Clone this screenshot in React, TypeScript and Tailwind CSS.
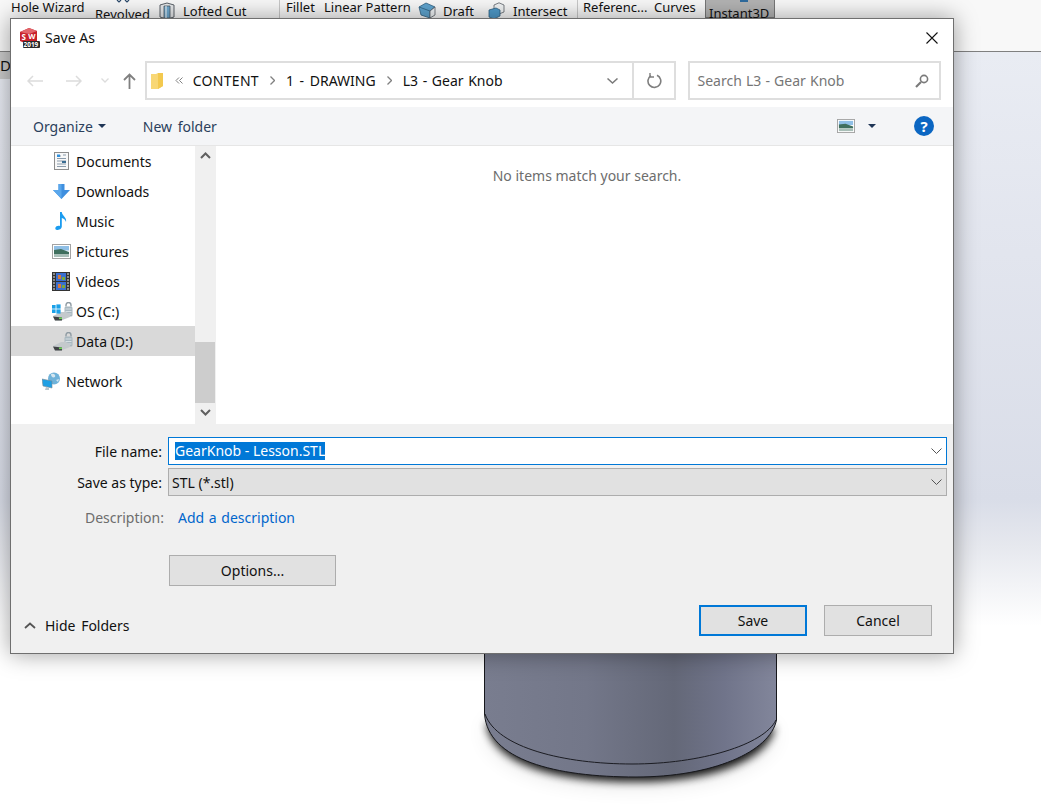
import type { ReactNode } from "react";

const sidebarItems = [
  { label: "Documents", icon: <DocumentsIcon /> },
  { label: "Downloads", icon: <DownloadsIcon /> },
  { label: "Music", icon: <MusicIcon /> },
  { label: "Pictures", icon: <PicturesIcon className="h-[15px] w-[19px]" /> },
  { label: "Videos", icon: <VideosIcon /> },
  { label: "OS (C:)", icon: <DriveIcon windows /> },
  { label: "Data (D:)", icon: <DriveIcon />, selected: true },
];

export default function App() {
  return (
    <div className="relative h-[812px] w-[1041px] overflow-hidden bg-white font-['Noto_Sans','Open_Sans',sans-serif] text-[14px] text-[#111]">
      <RibbonStrip />
      <div className="h-[574px] bg-[linear-gradient(180deg,#e9ecf3_0%,#e2e5ee_35%,#d9dde8_78%,#e6e8ee_86%,#ffffff_100%)]" />
      <div className="absolute left-0 top-[52px] flex h-[27px] w-[10px] items-center overflow-hidden bg-[#c9c9c9] text-[15px]">D</div>
      <Knob />
      <SaveDialog />
    </div>
  );
}

function RibbonStrip() {
  return (
    <div className="relative flex h-[52px] items-start overflow-hidden border-b border-[#808080] bg-[#f8f8f8] text-[13px] leading-[12px] text-[#111]">
      <svg className="absolute left-[116px] top-0 h-[3px] w-[14px]" viewBox="0 0 14 3">
        <path d="M1 0 L3 2 L5 0 M9 0 L11 2 L13 0" fill="none" stroke="#2b4a6b" strokeWidth="1.2" />
      </svg>
      <span className="ml-[11px] mt-[1px] w-[84px] whitespace-nowrap">Hole Wizard</span>
      <span className="mt-[8px] w-[63px] whitespace-nowrap">Revolved</span>
      <span className="w-[25px] pt-[2px]">
        <LoftedCutIcon />
      </span>
      <span className="mt-[5px] w-[96px] whitespace-nowrap">Lofted Cut</span>
      <div className="flex h-[18px] w-[298px] border-l border-[#c8c8c8] pl-[6px]">
        <span className="mt-[1px] w-[38px] whitespace-nowrap">Fillet</span>
        <span className="mt-[1px] w-[94px] whitespace-nowrap">Linear Pattern</span>
        <span className="w-[25px] pt-[2px]">
          <DraftIcon />
        </span>
        <span className="mt-[5px] w-[45px] whitespace-nowrap">Draft</span>
        <span className="w-[25px] pt-[2px]">
          <IntersectIcon />
        </span>
        <span className="mt-[5px] whitespace-nowrap">Intersect</span>
      </div>
      <div className="flex h-[18px] w-[128px] border-l border-[#c8c8c8] pl-[5px]">
        <span className="mt-[1px] w-[71px] whitespace-nowrap">Referenc...</span>
        <span className="mt-[1px] whitespace-nowrap">Curves</span>
      </div>
      <div className="relative h-[18px] w-[70px] whitespace-nowrap border border-t-0 border-[#777] bg-[#b3b3b3] pl-[3px] pt-[7px]">
        <span className="absolute left-[34px] top-0 h-[2px] w-[8px] bg-[#2f6b9e]" />
        Instant3D
      </div>
    </div>
  );
}

function Knob() {
  const outer =
    "M484.5 640 L484.5 714 C488 760 555 777 636 777 C712 777 770 752 776.5 720 L776.5 640 Z";
  const shadow = "M488 722 C496 760 555 777 636 777 C712 777 764 756 773 726 Z";
  return (
    <svg className="absolute left-[440px] top-[640px] h-[172px] w-[400px]" viewBox="440 640 400 172">
      <defs>
        <linearGradient id="body" x1="0" x2="1" y1="0" y2="0">
          <stop offset="0" stopColor="#797d8f" />
          <stop offset="0.35" stopColor="#737789" />
          <stop offset="0.65" stopColor="#646878" />
          <stop offset="0.82" stopColor="#70748a" />
          <stop offset="1" stopColor="#82869b" />
        </linearGradient>
        <filter id="wide" x="-30%" y="-80%" width="160%" height="280%">
          <feGaussianBlur stdDeviation="12" />
        </filter>
        <filter id="soft" x="-20%" y="-60%" width="140%" height="240%">
          <feGaussianBlur stdDeviation="4.5" />
        </filter>
      </defs>
      <path d={shadow} transform="translate(0 4)" fill="#000" opacity="0.18" filter="url(#wide)" />
      <path d={shadow} transform="translate(0 3)" fill="#000" stroke="#000" strokeWidth="3" opacity="0.9" filter="url(#soft)" />
      <path d={outer} fill="url(#body)" stroke="#17181c" strokeWidth="1" />
      <path d="M485 714 C497 748 565 764 632 764 C700 764 764 745 776 720" fill="none" stroke="#1b1c22" strokeWidth="1" />
    </svg>
  );
}

function SaveDialog() {
  return (
    <div className="absolute left-[10px] top-[18px] flex h-[636px] w-[944px] flex-col border border-[#6f6f6f] bg-white shadow-[0_0_22px_rgba(0,0,0,0.38)]">
      <div className="flex h-[37px] shrink-0 items-center pl-[9px] pr-[15px]">
        <SolidWorksIcon />
        <span className="ml-[5px] text-[14px]">Save As</span>
        <svg className="ml-auto h-[12px] w-[12px]" viewBox="0 0 12 12" stroke="#111" strokeWidth="1.1">
          <path d="M0.5 0.5 L11.5 11.5 M11.5 0.5 L0.5 11.5" />
        </svg>
      </div>
      <AddressRow />
      <CommandBar />
      <div className="flex h-[278px] shrink-0">
        <FolderTree />
        <div className="flex-1 pl-[5px] pt-[19px] text-center text-[14px] text-[#6d6d6d]">No items match your search.</div>
      </div>
      <SaveForm />
    </div>
  );
}

function AddressRow() {
  return (
    <div className="flex h-[51px] shrink-0 pr-[12px] pt-[5px]">
      <div className="flex h-[39px] w-[134px] items-center">
        <svg className="ml-[16px] h-[12px] w-[16px]" viewBox="0 0 16 12" fill="none" stroke="#dcdcdc" strokeWidth="1.5">
          <path d="M16 6 H1 M6 1 L1 6 L6 11" />
        </svg>
        <svg className="ml-[23px] h-[12px] w-[16px]" viewBox="0 0 16 12" fill="none" stroke="#dcdcdc" strokeWidth="1.5">
          <path d="M0 6 H15 M10 1 L15 6 L10 11" />
        </svg>
        <svg className="ml-[19px] h-[5px] w-[8px]" viewBox="0 0 8 5" fill="none" stroke="#dcdcdc" strokeWidth="1.3">
          <path d="M0.5 0.5 L4 4 L7.5 0.5" />
        </svg>
        <svg className="ml-[14px] h-[16px] w-[13px]" viewBox="0 0 13 16" fill="none" stroke="#808080" strokeWidth="1.8">
          <path d="M6.5 16 V1.5 M1 7 L6.5 1.5 L12 7" />
        </svg>
      </div>
      <div className="flex h-[39px] w-[532px] border-2 border-[#dedede]">
        <div className="flex min-w-0 flex-1 items-center pl-[4px]">
          <svg className="h-[16px] w-[12px]" viewBox="0 0 12 16">
            <path d="M0 1 H5 L7 0 H12 V13 L7 16 H0 Z" fill="#f8d775" />
            <path d="M7 0 H12 V13 L7 16 Z" fill="#f3c94f" />
          </svg>
          <svg className="ml-[12px] h-[7px] w-[8px]" viewBox="0 0 8 7" fill="none" stroke="#808080">
            <path d="M4 0.5 L1 3.5 L4 6.5 M7.5 0.5 L4.5 3.5 L7.5 6.5" />
          </svg>
          <span className="ml-[10px] tracking-[0.3px]">CONTENT</span>
          <Crumb />
          <span className="[word-spacing:2px]">1 - DRAWING</span>
          <Crumb />
          <span className="[word-spacing:1px]">L3 - Gear Knob</span>
          <svg className="ml-auto mr-[14px] h-[6px] w-[11px]" viewBox="0 0 11 6" fill="none" stroke="#7a7a7a" strokeWidth="1.5">
            <path d="M0.5 0.5 L5.5 5 L10.5 0.5" />
          </svg>
        </div>
        <div className="flex w-[42px] items-center justify-center border-l-2 border-[#dedede] pl-[2px]">
          <svg className="h-[16px] w-[16px]" viewBox="0 0 16 16" fill="none" stroke="#7f7f7f" strokeWidth="1.6">
            <path d="M10 2.2 A6.4 6.4 0 1 1 4 2.6" />
            <path d="M3 0 V4 H7" strokeWidth="1.4" />
          </svg>
        </div>
      </div>
      <div className="ml-[12px] flex h-[39px] w-[254px] items-center border-2 border-[#dedede] pl-[8px] pr-[10px] text-[#767676] [word-spacing:0.5px]">
        <span>Search L3 - Gear Knob</span>
        <svg className="ml-auto h-[14px] w-[14px]" viewBox="0 0 14 14" fill="none" stroke="#7a7a7a">
          <circle cx="9" cy="5" r="3.6" strokeWidth="1.6" />
          <path d="M6 8 L1 13" strokeWidth="2.2" />
        </svg>
      </div>
    </div>
  );
}

function Crumb() {
  return (
    <svg className="mx-[11px] h-[9px] w-[5px]" viewBox="0 0 5 9" fill="none" stroke="#808080" strokeWidth="1.3">
      <path d="M0.5 0.5 L4.5 4.5 L0.5 8.5" />
    </svg>
  );
}

function CommandBar() {
  return (
    <div className="flex h-[39px] shrink-0 items-center border-b border-[#e6e6e6] bg-[#f4f5f7] pl-[22px] pr-[19px] text-[14px] text-[#2b3f5c]">
      <span>Organize</span>
      <Caret className="ml-[5px]" />
      <span className="ml-[37px] [word-spacing:2px]">New folder</span>
      <PicturesIcon className="ml-auto h-[14px] w-[18px]" />
      <Caret className="ml-[13px]" />
      <div className="ml-[38px] flex h-[20px] w-[20px] items-center justify-center rounded-full bg-[#0b66c2] text-[15px] font-bold leading-none text-white">
        ?
      </div>
    </div>
  );
}

function FolderTree() {
  return (
    <div className="flex w-[205px] shrink-0 border-r border-[#f0f0f0]">
      <div className="w-[184px] text-[14px]">
        {sidebarItems.map((item) => (
          <TreeRow key={item.label} icon={item.icon} selected={item.selected} indent="pl-[41px]">
            {item.label}
          </TreeRow>
        ))}
        <div className="h-[10px]" />
        <TreeRow icon={<NetworkIcon />} indent="pl-[31px]">
          Network
        </TreeRow>
      </div>
      <div className="flex w-[20px] flex-col items-center bg-[#f0f0f0]">
        <svg className="mt-[6px] h-[7px] w-[11px]" viewBox="0 0 11 7" fill="none" stroke="#606060" strokeWidth="2">
          <path d="M1 6 L5.5 1.5 L10 6" />
        </svg>
        <div className="mt-[183px] h-[61px] w-full bg-[#cdcdcd]" />
        <svg className="mt-[6px] h-[7px] w-[11px]" viewBox="0 0 11 7" fill="none" stroke="#606060" strokeWidth="2">
          <path d="M1 1 L5.5 5.5 L10 1" />
        </svg>
      </div>
    </div>
  );
}

function TreeRow({
  icon,
  children,
  selected = false,
  indent,
}: {
  icon: ReactNode;
  children: ReactNode;
  selected?: boolean;
  indent: string;
}) {
  return (
    <div className={`flex h-[30px] items-center ${indent} ${selected ? "bg-[#d9d9d9]" : ""}`}>
      <span className="flex w-[24px] shrink-0 justify-start">{icon}</span>
      <span>{children}</span>
    </div>
  );
}

function SaveForm() {
  return (
    <div className="flex min-h-0 flex-1 flex-col bg-[#f0f0f0] pb-[17px] pr-[6px] pt-[13px]">
      <FormRow label="File name:">
        <div className="flex h-[28px] flex-1 items-center border border-[#0078d7] bg-white pl-[6px] pr-[4px]">
          <span className="bg-[#0078d7] leading-[18px] text-white">GearKnob - Lesson.STL</span>
          <FieldChevron />
        </div>
      </FormRow>
      <div className="mt-[3px]">
        <FormRow label="Save as type:">
          <div className="flex h-[28px] flex-1 items-center border border-[#adadad] bg-[#e1e1e1] pl-[3px] pr-[4px]">
            <span>STL (*.stl)</span>
            <FieldChevron />
          </div>
        </FormRow>
      </div>
      <div className="mt-[7px] flex h-[28px] items-center">
        <span className="w-[153px] text-right text-[#6d6d6d]">Description:</span>
        <span className="ml-[14px] text-[#0066cc] [word-spacing:1px]">Add a description</span>
      </div>
      <div className="mt-[24px] pl-[158px]">
        <div className="flex h-[31px] w-[167px] items-center justify-center border border-[#adadad] bg-[#e1e1e1]">Options...</div>
      </div>
      <div className="mt-auto flex items-end">
        <div className="mb-[1px] flex h-[20px] items-center pl-[13px]">
          <svg className="h-[7px] w-[12px]" viewBox="0 0 12 7" fill="none" stroke="#555" strokeWidth="1.8">
            <path d="M1 6 L6 1.5 L11 6" />
          </svg>
          <span className="ml-[9px] [word-spacing:2px]">Hide Folders</span>
        </div>
        <div className="ml-auto flex gap-[17px] pr-[15px]">
          <div className="flex h-[31px] w-[108px] items-center justify-center border-2 border-[#0078d7] bg-[#e1e1e1]">Save</div>
          <div className="flex h-[31px] w-[108px] items-center justify-center border border-[#adadad] bg-[#e1e1e1]">Cancel</div>
        </div>
      </div>
    </div>
  );
}

function FormRow({ label, children }: { label: string; children: ReactNode }) {
  return (
    <div className="flex items-center">
      <span className="w-[151px] shrink-0 text-right">{label}</span>
      <div className="ml-[6px] flex flex-1">{children}</div>
    </div>
  );
}

function FieldChevron() {
  return (
    <svg className="ml-auto h-[6px] w-[11px]" viewBox="0 0 11 6" fill="none" stroke="#555" strokeWidth="1">
      <path d="M0.5 0.5 L5.5 5.5 L10.5 0.5" />
    </svg>
  );
}

function Caret({ className }: { className: string }) {
  return (
    <svg className={`h-[4px] w-[8px] ${className}`} viewBox="0 0 8 4">
      <path d="M0 0 H8 L4 4 Z" fill="#1f3556" />
    </svg>
  );
}

function SolidWorksIcon() {
  return (
    <svg className="h-[20px] w-[20px]" viewBox="0 0 20 20">
      <path d="M0 4 L9 0 L17 3 V14 L9 17 L0 13 Z" fill="#c8202a" />
      <path d="M9 0 L17 3 L9 6 L0 4 Z" fill="#e2656b" />
      <text x="1.5" y="12" fontSize="8" fontWeight="700" fill="#fff">S</text>
      <text x="8.2" y="11" fontSize="7.5" fontWeight="700" fill="#fff">W</text>
      <rect x="3" y="13" width="17" height="7" rx="1" fill="#2a2a2a" />
      <text x="3.6" y="19" fontSize="6.4" fontWeight="700" fill="#fff">2019</text>
    </svg>
  );
}

function LoftedCutIcon() {
  return (
    <svg className="h-[18px] w-[18px]" viewBox="0 0 18 18">
      <path d="M2 3 L9 1 L16 3 V15 L9 17 L2 15 Z" fill="#e6e8ea" stroke="#5a6168" />
      <path d="M6 4 H12 V16 H6 Z" fill="#6fa9cf" stroke="#4a5560" strokeWidth="0.8" />
      <path d="M8 4 V16" stroke="#fff" strokeWidth="1" />
    </svg>
  );
}

function DraftIcon() {
  return (
    <svg className="h-[18px] w-[18px]" viewBox="0 0 18 18">
      <path d="M1 5 L8 1 L17 5 L12 9 V16 L3 13 Z" fill="#5fa4cf" stroke="#2f5f80" strokeWidth="0.8" />
      <path d="M1 5 L12 9 L17 5" fill="none" stroke="#2f5f80" strokeWidth="0.8" />
      <path d="M12 9 L17 5 V13 L12 16 Z" fill="#eef2f4" stroke="#5a6168" strokeWidth="0.8" />
    </svg>
  );
}

function IntersectIcon() {
  return (
    <svg className="h-[18px] w-[18px]" viewBox="0 0 18 18">
      <path d="M6 3 L11 0.8 L16 3 V10 L11 12 L6 10 Z" fill="#f1f3f4" stroke="#5a6168" strokeWidth="0.8" />
      <path d="M1 8 L8 6 L12 8 V14 L6 17 L1 15 Z" fill="#4f9bcb" stroke="#2f5f80" strokeWidth="0.8" />
    </svg>
  );
}

function DocumentsIcon() {
  return (
    <svg className="ml-[2px] h-[18px] w-[15px]" viewBox="0 0 15 18">
      <rect x="0.5" y="0.5" width="14" height="17" fill="#f8f8f8" stroke="#8d8d8d" />
      <path d="M3 4 H7 M9 3 H12 M3 6.5 H12 M3 9 H12 M3 12 H12 M3 14.5 H12" stroke="#8a9bab" />
      <path d="M3 2.5 H6 V5 H3 Z" fill="#2f8fdc" />
      <path d="M8 9 H12 V11 H8 Z" fill="#3a6d92" />
    </svg>
  );
}

function DownloadsIcon() {
  return (
    <svg className="ml-[1px] h-[15px] w-[17px]" viewBox="0 0 17 15">
      <path d="M5.5 0 H11.5 V6 H17 L8.5 15 L0 6 H5.5 Z" fill="#3f8fdf" />
      <path d="M5.5 0 H8.5 V15 L0 6 H5.5 Z" fill="#5aa7ec" />
    </svg>
  );
}

function MusicIcon() {
  return (
    <svg className="ml-[3px] h-[18px] w-[12px]" viewBox="0 0 12 18">
      <path d="M5 0 H6.8 C7 4 12 5 11 10 C10.5 7.5 8.5 6.5 6.8 6 V14.5 C6.8 17 4 18 2 18 C0 18 -0.3 15.5 1.5 14.3 C2.8 13.5 4 13.5 5 14 Z" fill="#1a9cf0" />
    </svg>
  );
}

function PicturesIcon({ className }: { className: string }) {
  return (
    <svg className={className} viewBox="0 0 19 15" preserveAspectRatio="none">
      <rect x="0.5" y="0.5" width="18" height="14" fill="#fff" stroke="#a3a3a3" />
      <rect x="2" y="2" width="15" height="4.5" fill="#8fbfe6" />
      <path d="M2 6 L9 5 L17 8 V10 H2 Z" fill="#3f6f5e" />
      <rect x="2" y="10" width="15" height="3" fill="#a9bfb8" />
    </svg>
  );
}

function VideosIcon() {
  return (
    <svg className="h-[19px] w-[18px]" viewBox="0 0 18 19">
      <rect width="18" height="19" fill="#333" />
      <path d="M1 2 H3 M1 5 H3 M1 8 H3 M1 11 H3 M1 14 H3 M1 17 H3 M15 2 H17 M15 5 H17 M15 8 H17 M15 11 H17 M15 14 H17 M15 17 H17" stroke="#e6e6e6" />
      <rect x="4" y="1" width="10" height="8" fill="#3a6fd0" />
      <rect x="4" y="10" width="10" height="8" fill="#3a6fd0" />
      <path d="M6 3 H9 V7 H6 Z M6 12 H9 V16 H6 Z" fill="#d9793a" />
      <path d="M10 5 H13 V8 H10 Z M10 13 H13 V16 H10 Z" fill="#7aa83a" />
    </svg>
  );
}

function DriveIcon({ windows = false }: { windows?: boolean }) {
  return (
    <svg className="h-[19px] w-[21px]" viewBox="0 0 21 19">
      <path d="M14 4.5 V3 A2.5 2.5 0 0 1 19 3 V4.5" fill="none" stroke="#8f9ba3" strokeWidth="1.4" />
      <rect x="12.5" y="4.5" width="8" height="10" rx="1.5" fill="#a9b8c0" />
      <path d="M13.5 7 H19.5 M13.5 9.5 H19.5 M13.5 12 H19.5" stroke="#e3eaee" strokeWidth="0.8" />
      <path d="M1 14 L9 10 H14 L18 12 V15 L9 18.5 H3 Z" fill="#c4c9cc" />
      <path d="M1 14.5 L10 15.5 V18.5 H3 Z" fill="#3f4245" />
      <rect x="7" y="15.5" width="3" height="1.6" fill="#6fd356" />
      {windows ? (
        <g fill="#1ba1e8">
          <rect x="0" y="3" width="3.6" height="3.6" />
          <rect x="4.4" y="2.4" width="4.2" height="4.2" />
          <rect x="0" y="7.4" width="3.6" height="3.6" />
          <rect x="4.4" y="7.4" width="4.2" height="4.2" />
        </g>
      ) : null}
    </svg>
  );
}

function NetworkIcon() {
  return (
    <svg className="h-[18px] w-[19px]" viewBox="0 0 19 18">
      <circle cx="12" cy="6.5" r="6" fill="#6fb2d9" />
      <path d="M9 2 C12 1 14 3 13 5 C11 6 9 5 9 2 Z M14 8 L17 7 L16 10 Z" fill="#d5e6ef" />
      <path d="M0 7 L10 9 V16 L1 14 Z" fill="#1f9fe4" stroke="#7c8a94" strokeWidth="0.6" />
      <path d="M4 15 L7 16 V18 H3 Z" fill="#b8c4cc" />
    </svg>
  );
}
